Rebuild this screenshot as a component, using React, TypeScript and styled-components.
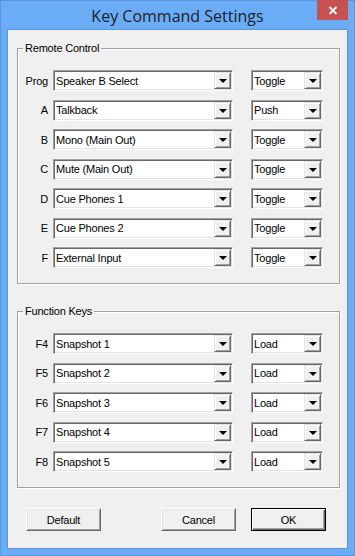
import styled, { createGlobalStyle, css } from "styled-components";

const GlobalStyle = createGlobalStyle`
  html, body {
    margin: 0;
    padding: 0;
    background: #ffffff;
  }
  body {
    font-family: "Liberation Sans", Arial, sans-serif;
  }
`;

const Window = styled.div`
  width: 355px;
  height: 556px;
  box-sizing: border-box;
  background: #6aacf5;
  border: 1px solid #5a96dc;
  display: flex;
  flex-direction: column;
`;

const TitleBar = styled.div`
  height: 28px;
  display: grid;
  grid-template-columns: 1fr auto 1fr;
  align-items: center;
`;

const Title = styled.div`
  grid-column: 2;
  font-family: "Open Sans", "Noto Sans", sans-serif;
  font-size: 16px;
  color: #1e1e1e;
  padding-top: 2px;
`;

const CloseButton = styled.div`
  grid-column: 3;
  justify-self: end;
  align-self: start;
  width: 31px;
  height: 20px;
  margin-top: -1px;
  margin-right: 6px;
  background: #c75050;
  display: flex;
  align-items: center;
  justify-content: center;
`;

const Frame = styled.div`
  flex: 1;
  display: flex;
  padding: 0 6px 6px;
`;

const Client = styled.div`
  flex: 1;
  background: #f0f0f0;
  border: 1px solid #5a96dc;
  display: flex;
  flex-direction: column;
  font-size: 11px;
  letter-spacing: -0.2px;
  color: #000;
`;

const Group = styled.fieldset<{ $top: number }>`
  margin: ${(p) => p.$top}px 7px 0 9px;
  padding: 15px 0 15px;
  border: 1px solid #a0a0a0;
  box-shadow: 1px 1px 0 #ffffff, inset 1px 1px 0 #ffffff;
  display: grid;
  grid-auto-rows: 21px;
  row-gap: 8.5px;
  min-width: 0;
`;

const Legend = styled.legend`
  margin-left: 5px;
  padding: 0 2px;
  line-height: 13px;
  font-size: 11px;
  background: #f0f0f0;
`;

const Row = styled.div`
  display: flex;
  align-items: center;
`;

const KeyLabel = styled.div`
  width: 30px;
  margin-right: 5px;
  text-align: right;
`;

const Combo = styled.div<{ $w: number }>`
  width: ${(p) => p.$w}px;
  height: 21px;
  box-sizing: border-box;
  display: flex;
  border: 1px solid;
  border-color: #a0a0a0 #ffffff #ffffff #a0a0a0;
  box-shadow: inset 1px 1px 0 #696969, inset -1px -1px 0 #e3e3e3;
  background: #ffffff;
  padding: 1px;
`;

const ComboText = styled.div`
  flex: 1;
  display: flex;
  align-items: center;
  padding-left: 1px;
  white-space: nowrap;
  overflow: hidden;
`;

const DropButton = styled.div`
  width: 17px;
  box-sizing: border-box;
  background: #f0f0f0;
  border: 1px solid;
  border-color: #e3e3e3 #696969 #696969 #e3e3e3;
  box-shadow: inset 1px 1px 0 #ffffff, inset -1px -1px 0 #a0a0a0;
  display: flex;
  align-items: center;
  justify-content: center;
`;

const Arrow = styled.div`
  width: 0;
  height: 0;
  border-left: 4px solid transparent;
  border-right: 4px solid transparent;
  border-top: 4px solid #000;
  margin-top: 1px;
`;

const Spacer = styled.div<{ $w: number }>`
  width: ${(p) => p.$w}px;
`;

const ButtonRow = styled.div`
  display: flex;
  gap: 15px;
  margin-top: 20px;
  padding: 0 21px 0 18px;
`;

const PushButton = styled.div<{ $primary?: boolean }>`
  width: 75px;
  height: 23px;
  box-sizing: border-box;
  background: #f0f0f0;
  display: flex;
  align-items: center;
  justify-content: center;
  border: 1px solid;
  border-color: #ffffff #696969 #696969 #ffffff;
  box-shadow: inset 1px 1px 0 #e3e3e3, inset -1px -1px 0 #a0a0a0;
  &:first-child {
    margin-right: auto;
  }
  ${(p) =>
    p.$primary &&
    css`
      border-color: #000;
      box-shadow: inset 1px 1px 0 #ffffff, inset -1px -1px 0 #696969,
        inset -2px -2px 0 #a0a0a0;
    `}
`;

const remote = [
  ["Prog", "Speaker B Select", "Toggle"],
  ["A", "Talkback", "Push"],
  ["B", "Mono (Main Out)", "Toggle"],
  ["C", "Mute (Main Out)", "Toggle"],
  ["D", "Cue Phones 1", "Toggle"],
  ["E", "Cue Phones 2", "Toggle"],
  ["F", "External Input", "Toggle"],
];

const fkeys = [
  ["F4", "Snapshot 1", "Load"],
  ["F5", "Snapshot 2", "Load"],
  ["F6", "Snapshot 3", "Load"],
  ["F7", "Snapshot 4", "Load"],
  ["F8", "Snapshot 5", "Load"],
];

const Select = ({ value, width }: { value: string; width: number }) => (
  <Combo $w={width}>
    <ComboText>{value}</ComboText>
    <DropButton>
      <Arrow />
    </DropButton>
  </Combo>
);

const KeyRow = ({ row }: { row: string[] }) => (
  <Row>
    <KeyLabel>{row[0]}</KeyLabel>
    <Select value={row[1]} width={180} />
    <Spacer $w={18} />
    <Select value={row[2]} width={72} />
  </Row>
);

export default () => {
  return (
    <>
      <GlobalStyle />
      <Window>
        <TitleBar>
          <Title>Key Command Settings</Title>
          <CloseButton>
            <svg width="10" height="9" viewBox="0 0 10 9">
              <path d="M1.5 1 L8.5 8 M8.5 1 L1.5 8" stroke="#fff" strokeWidth="1.8" />
            </svg>
          </CloseButton>
        </TitleBar>
        <Frame>
          <Client>
            <Group $top={12}>
              <Legend>Remote Control</Legend>
              {remote.map((r) => (
                <KeyRow key={r[0]} row={r} />
              ))}
            </Group>
            <Group $top={21}>
              <Legend>Function Keys</Legend>
              {fkeys.map((r) => (
                <KeyRow key={r[0]} row={r} />
              ))}
            </Group>
            <ButtonRow>
              <PushButton>Default</PushButton>
              <PushButton>Cancel</PushButton>
              <PushButton $primary>OK</PushButton>
            </ButtonRow>
          </Client>
        </Frame>
      </Window>
    </>
  );
};
